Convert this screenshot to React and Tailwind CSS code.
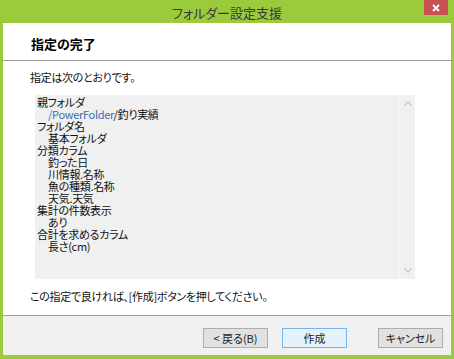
import React from 'react';

const lines = [
  { text: '親フォルダ', indent: false },
  { text: 'path', indent: true },
  { text: 'フォルダ名', indent: false },
  { text: '基本フォルダ', indent: true },
  { text: '分類カラム', indent: false },
  { text: '釣った日', indent: true },
  { text: '川情報.名称', indent: true },
  { text: '魚の種類.名称', indent: true },
  { text: '天気.天気', indent: true },
  { text: '集計の件数表示', indent: false },
  { text: 'あり', indent: true },
  { text: '合計を求めるカラム', indent: false },
  { text: '長さ(cm)', indent: true },
];

const font = "font-['Noto_Sans_CJK_JP','Noto_Sans',sans-serif] [font-feature-settings:'palt']";

const Button = ({ label, isDefault, extra = '' }) => (
  <button
    className={
      'shrink-0 w-[65px] h-[20px] flex items-center justify-center text-[11px] leading-none text-[#222] border ' +
      (isDefault ? 'bg-[#e5f1fb] border-[#7ab4ea] ' : 'bg-[#e1e1e1] border-[#adadad] ') +
      extra
    }
  >
    {label}
  </button>
);

const App = () => {
  return (
    <div className={`w-[454px] h-[359px] bg-[#9bca3c] flex flex-col ${font}`}>
      {/* title bar */}
      <div className="relative h-[23px] flex items-center justify-center">
        <span className="text-[13px] text-[#3a3a3a] leading-none pt-[1px]">フォルダー設定支援</span>
        <div className="absolute right-[6px] top-0 w-[24px] h-[15px] bg-[#c75050] flex items-center justify-center">
          <svg width="8" height="8" viewBox="0 0 8 8">
            <path d="M1 1 L7 7 M7 1 L1 7" stroke="white" strokeWidth="1.8" />
          </svg>
        </div>
      </div>

      {/* client */}
      <div className="mx-[3px] h-[332px] flex flex-col bg-white">
        <div className="h-[38px] border-b border-[#a0a0a0] flex items-center pl-[28px]">
          <span className="text-[13px] font-bold text-black leading-none pt-[3px]">指定の完了</span>
        </div>

        <div className="flex-1 flex flex-col text-[11px] tracking-[-0.3px] text-[#111]">
          <div className="pl-[27px] pt-[10px] h-[34px] leading-[12px]">指定は次のとおりです。</div>
          <div className="ml-[32px] w-[380px] h-[184px] bg-[#f0f0f0] flex">
            <div className="flex-1 pl-[2px] pt-[1px] leading-[12px]">
              {lines.map((l, i) => (
                <div key={i} className={'h-[12px] ' + (l.indent ? 'pl-[11px]' : '')}>
                  {l.text === 'path' ? (
                    <>
                      <span className="text-[#3a6db5]">/PowerFolder</span>/釣り実績
                    </>
                  ) : (
                    l.text
                  )}
                </div>
              ))}
            </div>
            <div className="w-[16px] border-l border-[#f7f7f7] flex flex-col items-center justify-between py-[6px]">
              <svg width="8" height="5" viewBox="0 0 8 5">
                <path d="M0.5 4.5 L4 1 L7.5 4.5" stroke="#c2c2c2" strokeWidth="1.2" fill="none" />
              </svg>
              <svg width="8" height="5" viewBox="0 0 8 5">
                <path d="M0.5 0.5 L4 4 L7.5 0.5" stroke="#c2c2c2" strokeWidth="1.2" fill="none" />
              </svg>
            </div>
          </div>
          <div className="pl-[27px] pt-[11px] leading-[12px]">
            この指定で良ければ、[作成]ボタンを押してください。
          </div>
        </div>

        <div className="h-[40px] border-t border-[#a0a0a0] bg-[#f0f0f0] flex items-start pt-[12px] pl-[200px] gap-[14px]">
          <Button label="< 戻る(B)" />
          <Button label="作成" isDefault />
          <Button label="キャンセル" extra="ml-[17px]" />
        </div>
      </div>
    </div>
  );
};

export default App;
